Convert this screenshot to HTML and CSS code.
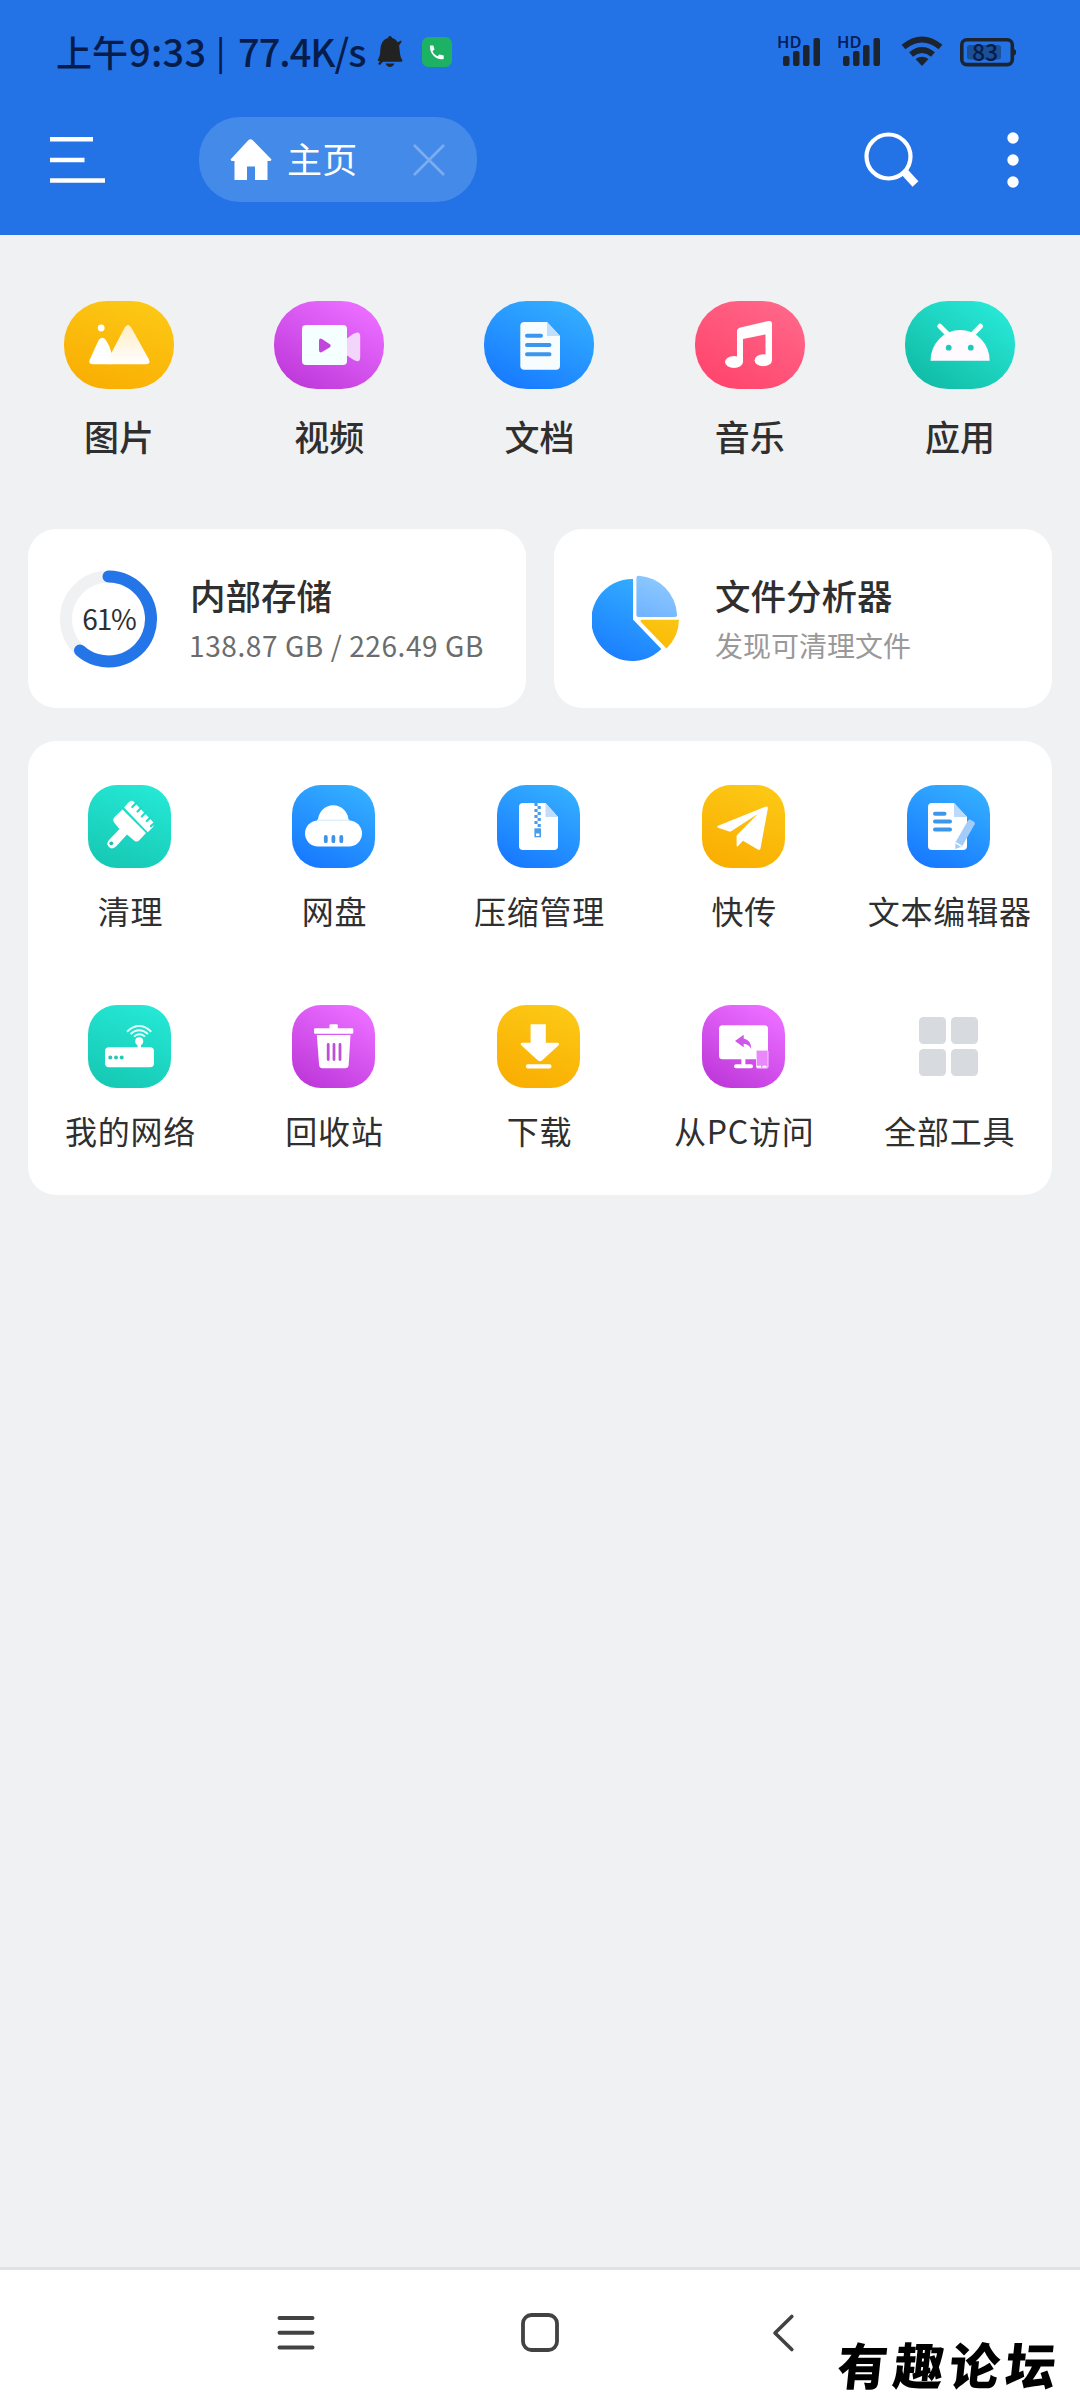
FILE: index.html
```html
<!DOCTYPE html>
<html lang="zh-CN">
<head>
<meta charset="utf-8">
<title>主页</title>
<link rel="stylesheet" href="styles.css">
</head>
<body>
<svg class="defs" width="0" height="0" aria-hidden="true">
  <defs>
    <linearGradient id="blue" x1=".3" y1="1" x2=".7" y2="0"><stop offset="0" stop-color="#1a7dff"/><stop offset="1" stop-color="#33adff"/></linearGradient>
    <linearGradient id="sky" x1=".3" y1="1" x2=".7" y2="0"><stop offset="0" stop-color="#72b4ff"/><stop offset="1" stop-color="#8fcbff"/></linearGradient>
    <linearGradient id="gold" x1=".3" y1="1" x2=".7" y2="0"><stop offset="0" stop-color="#fdb900"/><stop offset="1" stop-color="#fac515"/></linearGradient>
    <linearGradient id="snow" x1="0" y1="1" x2="0" y2="0"><stop offset="0" stop-color="#fff"/><stop offset="1" stop-color="#ffedc4"/></linearGradient>
    <g id="signal">
      <rect x="6" y="20" width="6.5" height="10" rx="2"/><rect x="16" y="15" width="6.5" height="15" rx="2"/><rect x="26" y="9" width="6.5" height="21" rx="2"/><rect x="36.5" y="2" width="6.5" height="28" rx="2"/>
    </g>
  </defs>
</svg>

<header class="header">
  <div class="status">
    <div class="status-left">
      <span class="clock-cn">上午</span><span class="clock">9:33</span><span class="bar">|</span><span class="speed">77.4K/s</span>
      <svg class="bell" width="26" height="32" viewBox="0 0 26 32" fill="#222"><path d="M13 0c1.300 0 1.800.8 1.900 2 2.600.5 4.500 2 5.700 4.200L24 4.500l.8 1-2.700 4c1 7 .6 10.300 3.200 14.500.4 1-.1 1.700-1 1.700H6L3 29l-2-1 2-3C.8 25.400.3 24.500 1 23.500 4.400 18.500 2.400 13 4.500 8 5.800 4.500 8 2.500 11.100 2 11.200.8 11.700 0 13 0zM8.500 27.500h9c-1 2.300-2.500 3.500-4.500 3.500s-3.500-1.200-4.500-3.500z"/></svg>
      <svg class="call" width="30" height="30" viewBox="0 0 30 30"><rect width="30" height="30" rx="6.500" fill="#1db263"/><path d="M8 8.500h3.300l1.200 4-2 1.700c1.200 2.500 2.600 3.800 5 5l2-1.700 4.200 1v3.500c-7 1.500-14.500-5-13.700-13.500z" fill="#fff"/></svg>
    </div>
    <div class="status-right">
      <div class="sim"><svg width="44" height="32" fill="#1c2430"><use href="#signal"/></svg><span class="hd">HD</span></div>
      <div class="sim"><svg width="44" height="32" fill="#1c2430"><use href="#signal"/></svg><span class="hd">HD</span></div>
      <svg class="wifi" width="42" height="31" viewBox="0 0 42 31" fill="none" stroke="#1c2430" stroke-width="6"><path d="M2.500 11Q21-4 39.500 11"/><path d="M10 18.500Q21 9.500 32 18.500"/><path d="M21 30l-6.500-7Q21 18.500 27.500 23z" fill="#1c2430" stroke="none"/></svg>
      <div class="battery"><svg width="57" height="29" viewBox="0 0 57 29"><rect x="1.800" y="1.800" width="50.500" height="24.800" rx="5" fill="none" stroke="#1c2430" stroke-width="3.600"/><rect x="7" y="7" width="34" height="14.500" rx="2.500" fill="#1c5096"/><path d="M53 10l3 2.500v3.500l-3 2.500z" fill="#1c2430"/></svg><span class="level">83</span></div>
    </div>
  </div>
  <nav class="toolbar">
    <svg class="menu" width="56" height="46" viewBox="0 0 56 46" fill="#fff"><path d="M0 0h43v4.500H0zM0 20.700h34.500v4.500H0zM0 41.200h55v4.500H0z"/></svg>
    <div class="tab">
      <svg width="42" height="42" viewBox="0 0 42 42" fill="#fff"><path d="M18.300 1.200Q20.500-.7 22.700 1.200L41.500 20.500 40.500 22H37.500V41H25V27.500H17V41H4.500V22H1.500L.5 20.500z"/></svg>
      <span>主页</span>
      <svg class="close" width="32" height="32" viewBox="0 0 32 32" stroke="#7dacf1" stroke-width="2.600"><path d="M1 1l30 30M31 1L1 31"/></svg>
    </div>
    <svg class="search" width="56" height="56" viewBox="0 0 56 56" fill="none" stroke="#fff"><circle cx="24.500" cy="24.500" r="22" stroke-width="4.200"/><path d="M40.500 40L51.500 52" stroke-width="8"/></svg>
    <svg class="more" width="12" height="56" viewBox="0 0 12 56" fill="#fff"><circle cx="6" cy="6" r="5.700"/><circle cx="6" cy="28" r="5.700"/><circle cx="6" cy="50" r="5.700"/></svg>
  </nav>
</header>

<main class="main">
  <section class="categories">
    <a class="category"><span class="pill yellow"><svg width="110" height="88" viewBox="0 0 110 88" fill="#fff"><circle cx="37.200" cy="27" r="3.400"/><path d="M34.700 39q3.600-4.500 7.200 0 3.500 5 5.600 13L47 63.300H29q-5 0-3.200-4.800z"/><path d="M45 63.300q-.5-7 3.500-13.500L60.500 27q3.500-6 7 0L85 58.500q1.800 4.800-3.200 4.800z" fill="url(#snow)"/></svg></span><span>图片</span></a>
    <a class="category"><span class="pill purple"><svg width="110" height="88" viewBox="0 0 110 88"><rect x="28" y="24" width="45" height="40" rx="4" fill="#f6ffff"/><path d="M45 40q0-3.500 3-2l7.500 5q2.500 1.700 0 3.400L48 51q-3 1.500-3-2z" fill="#c148dc"/><path d="M73 37.500l6-4.500q7-4 7.200 2v21q0 7-7.200 2.500l-6-4z" fill="#f3d5fb"/></svg></span><span>视频</span></a>
    <a class="category"><span class="pill azure"><svg width="110" height="88" viewBox="0 0 110 88"><path d="M40.300 21H63l13 14v29.700q0 4-4 4H40.300q-4 0-4-4V25q0-4 4-4z" fill="#f7fdff"/><path d="M63 21l13 14H63z" fill="#bfdfff"/><path d="M43 34.700h14M43 44h22.500M43 53.200h22.500" stroke="#3b96ee" stroke-width="4" stroke-linecap="round"/></svg></span><span>文档</span></a>
    <a class="category"><span class="pill pink"><svg width="110" height="88" viewBox="0 0 110 88" fill="#fff"><path d="M42 30q0-2.500 2.500-3.200L73.500 20q3.500-.5 3.500 3v36h-6.500V33.400L48 38v23h-6z"/><ellipse cx="39" cy="61" rx="9" ry="6"/><ellipse cx="68.300" cy="59.200" rx="8.700" ry="6"/></svg></span><span>音乐</span></a>
    <a class="category"><span class="pill mint"><svg width="110" height="88" viewBox="0 0 110 88"><path d="M25.500 59.700a29.600 30.700 0 0 1 59.200 0z" fill="#fffaff"/><path d="M34.800 25.200L44.500 35M75.500 25.200L66 35" stroke="#fff" stroke-width="5" stroke-linecap="round"/><g fill="#20c9b5"><circle cx="43.700" cy="46.700" r="2.900"/><circle cx="65.800" cy="46.700" r="2.900"/></g></svg></span><span>应用</span></a>
  </section>

  <section class="cards">
    <article class="card storage">
      <div class="ring"><svg width="98" height="98" viewBox="0 0 98 98" fill="none" stroke-width="12"><circle cx="48.500" cy="49" r="42.500" stroke="#f0f1f3"/><path d="M48.500 6.500A42.500 42.500 0 1 1 20 80.500" stroke="#2375e8" stroke-linecap="round"/></svg><span>61%</span></div>
      <div class="info"><h2>内部存储</h2><p class="usage">138.87 GB / 226.49 GB</p></div>
    </article>
    <article class="card analyzer">
      <svg width="88" height="88" viewBox="592 575 88 88"><path d="M633 579V619.500L661.300 649A41 41 0 1 1 633 579z" fill="url(#blue)"/><path d="M636.400 578q0-2.500 2.500-2.300A41 41 0 0 1 677 614.500q.2 2.500-2.300 2.500H638.500q-2.100 0-2.100-2z" fill="url(#sky)"/><path d="M641 622q-1.500-2 1-2.200h37A41 41 0 0 1 666.500 648.500z" fill="url(#gold)"/></svg>
      <div class="info"><h2>文件分析器</h2><p>发现可清理文件</p></div>
    </article>
  </section>

  <section class="tools">
    <a class="tool"><span class="tile teal"><svg width="83" height="83" viewBox="0 0 83 83"><g fill="#fff"><path d="M34.500 24.500L58 48l-6.500 7q-3 3-6 0l-6.500-5.500L28.500 61q-4.500 4.500-8 .5-3-3.500 1.500-7.500L31.500 44l-5-6q-2.500-3 0-6z"/><path d="M36 22.500l5-5.500q2.500-2.500 5 0L65 37q2.500 2.500 0 5l-5.200 5.200z"/></g><path d="M44.300 22l5-5M49.500 26.500l4-4M53.800 31.500l5-5M58.800 36l5-5M63 41l4-3" stroke="#20dbc8" stroke-width="2.200" stroke-linecap="round"/><circle cx="23.300" cy="58.300" r="1.900" fill="#20bda8"/></svg></span><span class="name">清理</span></a>
    <a class="tool"><span class="tile azure"><svg width="83" height="83" viewBox="0 0 83 83"><path d="M26 36a15.200 15.800 0 0 1 30.500 0z" fill="#fff"/><rect x="13" y="35.500" width="57" height="26" rx="13" fill="#fff"/><path d="M25 35.200h32.500" stroke="#dff2fb" stroke-width="1.500"/><path d="M33.800 52v4.200M41.400 52v4.200M49.300 52v4.200" stroke="#3c93e8" stroke-width="3.800" stroke-linecap="round"/></svg></span><span class="name">网盘</span></a>
    <a class="tool"><span class="tile azure"><svg width="83" height="83" viewBox="0 0 83 83"><path d="M26 18H48.500L61 32v29q0 4-4 4H26q-4 0-4-4V22q0-4 4-4z" fill="#fff"/><path d="M48.500 18L61 32H48.500z" fill="#c3dcfb"/><path d="M39 18v24" stroke="#4c9de9" stroke-width="3.200" stroke-dasharray="3 3"/><path d="M42.200 21v21" stroke="#4c9de9" stroke-width="3.200" stroke-dasharray="3 3"/><path d="M37.400 43.300H44v9h-6.600z" fill="#4c9de9"/><path d="M39 48.500h3.400v2.500H39z" fill="#fff"/></svg></span><span class="name">压缩管理</span></a>
    <a class="tool"><span class="tile yellow"><svg width="83" height="83" viewBox="0 0 83 83" fill="#fff"><path d="M63.500 21.700q2.800-.7 2.300 2L58.500 63.500q-.7 2.300-2.700 1L41 55.700l-5.200 5.500q-1.200.8-1.200-.7V50.500L55.800 29 29.500 46q-1.500 1-3 .3L16 42.800q-1.500-1 0-2z"/></svg></span><span class="name">快传</span></a>
    <a class="tool"><span class="tile azure"><svg width="83" height="83" viewBox="0 0 83 83"><path d="M25 18H47L60 32v29q0 4-4 4H25q-4 0-4-4V22q0-4 4-4z" fill="#fff"/><path d="M47 18l13 14H47z" fill="#b9dafd"/><path d="M28 28.700h9.500M28 36.500h15M28 44.500h15" stroke="#3c96ec" stroke-width="4" stroke-linecap="round"/><path d="M61 35.500q1-1.500 2.500-.7l3.500 2q1.500 1 .7 2.500L55 61.500 48.300 64V57.500z" fill="#a4ccfb"/><path d="M48.300 57.700l6.500 3.700" stroke="#fff" stroke-width="1.500"/></svg></span><span class="name">文本编辑器</span></a>
    <a class="tool"><span class="tile teal"><svg width="83" height="83" viewBox="0 0 83 83"><g fill="#fff"><rect x="17" y="42.300" width="49" height="20" rx="4"/><circle cx="51.200" cy="36.300" r="4"/><path d="M49.500 38h3.500v5h-3.500z"/></g><path d="M39 26.700Q51 15.500 63.300 26.700M42.500 29Q51 21.500 60 29M46 31.500Q51 27 57 31.500" fill="none" stroke="#e4fffb" stroke-width="1.900"/><g fill="#27c8b6"><circle cx="22.300" cy="52.400" r="2"/><circle cx="28" cy="52.400" r="2"/><circle cx="33.700" cy="52.400" r="2"/></g></svg></span><span class="name">我的网络</span></a>
    <a class="tool"><span class="tile purple"><svg width="83" height="83" viewBox="0 0 83 83"><path d="M22 24.500q0-1.200 1.200-1.200H37.500v-3q0-1 1-1h6.300q1 0 1 1v3H60q1.300 0 1.300 1.200v3q0 1.200-1.300 1.200H23.200q-1.200 0-1.200-1.200zM24.800 30h33.700L56.700 60q-.4 3.300-3.500 3.300H30.500q-3 0-3.400-3.300z" fill="#fff"/><path d="M36.200 39.500v15M42 39.500v15M48 39.500v15" stroke="#bd50d5" stroke-width="2.800" stroke-linecap="round"/></svg></span><span class="name">回收站</span></a>
    <a class="tool"><span class="tile yellow"><svg width="83" height="83" viewBox="0 0 83 83" fill="#fff"><path d="M33.600 19.300h15.200V37.800h11.500q3 .5 1 2.700L45 55.500q-2 1.500-4 0L24.500 40.500q-2-2.200 1-2.700h8.100z"/><rect x="28.800" y="59.300" width="25.700" height="4.200" rx="2"/></svg></span><span class="name">下载</span></a>
    <a class="tool"><span class="tile purple"><svg width="83" height="83" viewBox="0 0 83 83"><g fill="#fff"><rect x="17" y="20.300" width="49" height="34" rx="3.500"/><path d="M39.400 54h4v6h-4z"/><rect x="32" y="59.300" width="19" height="4" rx="2"/></g><rect x="54.500" y="45.500" width="11.500" height="17.500" rx="1" fill="#e987fc" stroke="#f6cffd"/><path d="M55 61.700h10.500" stroke="#fff" stroke-width="1.800" stroke-dasharray="4 1.500"/><path d="M33 36l8.700-6.200v3.700q7.300 1.500 7.500 10.300-2.500-4.700-7.500-5v3.500z" fill="#cf57e8"/></svg></span><span class="name">从PC访问</span></a>
    <a class="tool"><span class="tile"><svg width="83" height="83" viewBox="0 0 83 83" fill="#d7dade"><rect x="12" y="12" width="27" height="27" rx="4.500"/><rect x="44" y="12" width="27" height="27" rx="4.500"/><rect x="12" y="44" width="27" height="27" rx="4.500"/><rect x="44" y="44" width="27" height="27" rx="4.500"/></svg></span><span class="name">全部工具</span></a>
  </section>
</main>

<footer class="navbar">
  <svg width="38" height="40" viewBox="0 0 38 40" stroke="#424242" stroke-width="4" stroke-linecap="round"><path d="M2.500 5h33M2.500 19.700h33M2.500 34.500h33"/></svg>
  <svg width="38" height="40" viewBox="0 0 38 40" fill="none" stroke="#424242" stroke-width="3.800"><rect x="2" y="2" width="34" height="35" rx="8.500"/></svg>
  <svg width="38" height="40" viewBox="0 0 38 40" fill="none" stroke="#424242" stroke-width="3.600" stroke-linecap="round" stroke-linejoin="round"><path d="M26.800 3.500L10 20l16.800 16.500"/></svg>
  <span class="watermark">有趣论坛</span>
</footer>
</body>
</html>
```

FILE: styles.css
```css
* { box-sizing: border-box; margin: 0; padding: 0; }
body {
  display: flex;
  flex-direction: column;
  width: 1080px;
  height: 2400px;
  overflow: hidden;
  background: #f0f1f3;
  color: #2f2f2f;
  font-family: "Noto Sans CJK SC", sans-serif;
}
svg { display: block; flex: none; }
.defs { position: absolute; }

/* Header */
.header { height: 235px; background: #2373e7; }
.status {
  display: flex;
  justify-content: space-between;
  height: 104px;
  padding: 0 63px 0 56px;
  color: #061d4c;
}
.status-left, .status-right { display: flex; align-items: center; height: 104px; }
.status-left { font-size: 36px; font-weight: 500; line-height: 50px; white-space: nowrap; }
.status-left span { padding-bottom: 3px; }
.clock-cn { width: 73px; }
.clock, .speed { font-size: 38px; }
.clock { width: 87px; letter-spacing: .3px; }
.bar { width: 22px; font-size: 33px; }
.speed { width: 139px; letter-spacing: -1px; }
.call { margin-left: 19px; }
.sim { position: relative; width: 44px; margin-right: 16px; }
.hd {
  position: absolute;
  top: -2px;
  left: 0;
  font: 600 16.5px/16px "Noto Sans", sans-serif;
  color: #04205c;
}
.wifi { margin: -2px 17px 0 4px; }
.battery { position: relative; }
.level {
  position: absolute;
  top: -1px;
  left: 12px;
  font: 500 23px/28px "Noto Sans CJK SC", sans-serif;
  color: #061d4c;
}
.toolbar { display: flex; align-items: center; height: 109px; padding: 2px 61px 0 50px; }
.tab {
  display: flex;
  align-items: center;
  width: 278px;
  height: 85px;
  margin-left: 93px;
  padding: 0 32px 0 31px;
  border-radius: 41px;
  background: #438ae9;
  color: #fff;
  font-size: 35px;
  line-height: 50px;
}
.tab span { margin-left: 15px; padding-bottom: 4px; letter-spacing: .3px; }
.close { margin-left: auto; }
.search { margin-left: auto; }
.more { margin-left: 87px; }

/* Media categories */
.main { flex: 1; }
.categories { display: grid; grid-template-columns: repeat(5, 1fr); padding: 66px 15px 0 14px; }
.category {
  display: flex;
  flex-direction: column;
  align-items: center;
  gap: 22px;
  font-size: 35px;
  font-weight: 500;
  line-height: 50px;
}
.pill { width: 110px; height: 88px; border-radius: 43px; }
.yellow { background: linear-gradient(20deg, #f9ab00, #fdcb17); }
.purple { background: linear-gradient(30deg, #b932d5, #e96bff 85%); }
.azure { background: linear-gradient(25deg, #1677ff 5%, #35b1ff 95%); }
.pink { background: linear-gradient(30deg, #ff4069, #ff6b8c); }
.mint { background: linear-gradient(35deg, #0fb9a2 5%, #29ebda 95%); }
.teal { background: linear-gradient(20deg, #15c6b1, #24e7d4 90%); }

/* Storage and analyzer cards */
.cards { display: grid; grid-template-columns: 498px 498px; gap: 28px; padding: 68px 28px 0; }
.card {
  display: flex;
  align-items: center;
  height: 179px;
  border-radius: 28px;
  background: #fff;
}
.storage { padding-left: 32px; }
.analyzer { padding-left: 38px; }
.ring { position: relative; width: 98px; height: 98px; }
.ring span {
  position: absolute;
  inset: 0;
  text-align: center;
  font: 400 28px/96px "Noto Sans CJK SC", sans-serif;
  letter-spacing: -1.2px;
}
.info { padding: 2px 0 0 32px; white-space: nowrap; }
.analyzer .info { padding-left: 35px; }
.info h2 { font-size: 35.500px; font-weight: 500; line-height: 50px; }
.info p { font-size: 28px; line-height: 50px; color: #999; }
.info .usage { margin-left: -1px; color: #6c6c6c; letter-spacing: .6px; }

/* Tool grid */
.tools {
  display: grid;
  grid-template-columns: 203px 205px 205px 204.500px 206.500px;
  row-gap: 72px;
  height: 454px;
  margin: 33px 28px 0;
  padding: 44px 0 42px;
  border-radius: 28px;
  background: #fff;
}
.tool {
  display: flex;
  flex-direction: column;
  align-items: center;
  gap: 20px;
  height: 148px;
  font-size: 32px;
  line-height: 44px;
  white-space: nowrap;
}
.tile { width: 83px; height: 83px; border-radius: 29px; }
.name { padding-left: 2px; letter-spacing: .8px; }

/* System navigation */
.navbar {
  position: relative;
  display: flex;
  justify-content: center;
  gap: 206px;
  height: 133px;
  padding-top: 43px;
  border-top: 3px solid #e0e2e4;
  background: #fff;
}
.watermark {
  position: absolute;
  top: 61px;
  left: 838px;
  font-size: 50px;
  font-weight: 900;
  line-height: 64px;
  letter-spacing: 6px;
  color: #000;
  white-space: nowrap;
  transform: skewX(-6deg);
}
```
